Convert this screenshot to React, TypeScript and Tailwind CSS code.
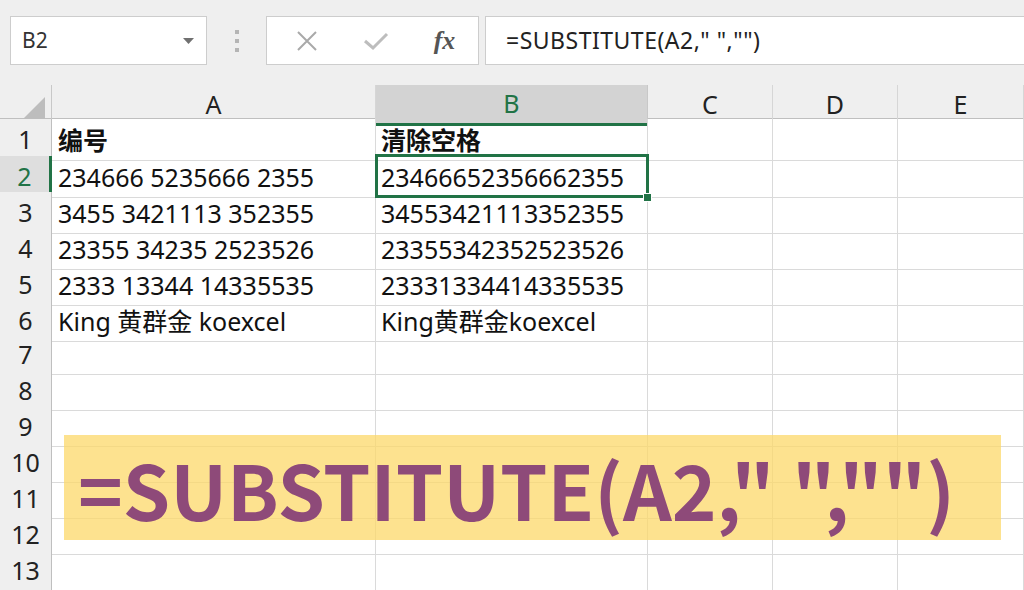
const cols = ["A", "B", "C", "D", "E"];

const rows: { a: string; b: string; bold?: boolean }[] = [
  { a: "编号", b: "清除空格", bold: true },
  { a: "234666 5235666 2355", b: "23466652356662355" },
  { a: "3455 3421113 352355", b: "34553421113352355" },
  { a: "23355 34235 2523526", b: "23355342352523526" },
  { a: "2333 13344 14335535", b: "23331334414335535" },
  { a: "King 黄群金 koexcel", b: "King黄群金koexcel" },
  { a: "", b: "" },
  { a: "", b: "" },
  { a: "", b: "" },
  { a: "", b: "" },
  { a: "", b: "" },
  { a: "", b: "" },
  { a: "", b: "" },
];

const gridCols = "grid grid-cols-[52px_324px_272px_125px_125px_1fr]";
const font = { fontFamily: '"Noto Sans", "Noto Sans CJK SC", sans-serif' };

function Toolbar() {
  return (
    <div className="h-[85px] flex items-start pt-[16px] bg-[#efefef]">
      {/* name box */}
      <div className="ml-[10px] w-[197px] h-[49px] bg-white border border-[#cdcdcd] flex items-center justify-between pl-[11px] pr-[12px]">
        <span className="text-[21px] text-[#333]">B2</span>
        <svg width="11" height="6" viewBox="0 0 11 6">
          <path d="M0 0 L11 0 L5.5 6 Z" fill="#707070" />
        </svg>
      </div>
      <div className="w-[59px] h-[49px] flex flex-col items-center justify-center gap-[5px]">
        <div className="w-[4px] h-[4px] bg-[#b5b5b5]" />
        <div className="w-[4px] h-[4px] bg-[#b5b5b5]" />
        <div className="w-[4px] h-[4px] bg-[#b5b5b5]" />
      </div>
      {/* cancel / enter / fx */}
      <div className="w-[213px] h-[49px] bg-white border border-[#cdcdcd] flex items-center">
        <div className="w-[70px] flex justify-center pl-[10px]">
          <svg width="22" height="22" viewBox="0 0 22 22">
            <path d="M2 2 L20 20 M20 2 L2 20" stroke="#a9a9a9" strokeWidth="2" fill="none" />
          </svg>
        </div>
        <div className="w-[70px] flex justify-center pl-[8px]">
          <svg width="26" height="20" viewBox="0 0 26 20">
            <path d="M2 10 L10 17 L24 3" stroke="#bdbdbd" strokeWidth="3" fill="none" />
          </svg>
        </div>
        <div className="flex-1 flex justify-center pl-[4px]">
          <span
            className="text-[26px] italic font-bold text-[#555] leading-none"
            style={{ fontFamily: '"Liberation Serif", serif' }}
          >
            fx
          </span>
        </div>
      </div>
      {/* formula input */}
      <div className="ml-[6px] flex-1 h-[49px] bg-white border border-[#cdcdcd] border-r-0 flex items-center pl-[20px]">
        <span className="text-[23px] tracking-[0.5px] text-[#222]">=SUBSTITUTE(A2," ","")</span>
      </div>
    </div>
  );
}

function HeaderRow() {
  return (
    <div className={`${gridCols} h-[34px] bg-[#efefef] border-b border-[#bfbfbf]`}>
      <div className="border-r border-[#c8c8c8] flex items-end justify-end pr-[6px] pb-[5px]">
        <svg width="23" height="23" viewBox="0 0 23 23">
          <path d="M23 0 L23 23 L0 23 Z" fill="#bdbdbd" />
        </svg>
      </div>
      {cols.map((c) => (
        <div
          key={c}
          className={
            c === "B"
              ? "bg-[#d3d3d3] border-r border-[#c8c8c8] border-b-[3px] border-b-[#217346] -mb-px flex items-center justify-center text-[25px] text-[#217346]"
              : "border-r border-[#d6d6d6] flex items-center justify-center text-[25px] text-[#222]"
          }
        >
          {c}
        </div>
      ))}
    </div>
  );
}

export default function App() {
  return (
    <div className="w-[1024px] h-[590px] overflow-hidden relative bg-white" style={font}>
      <Toolbar />
      <HeaderRow />
      {rows.map((r, i) => {
        const n = i + 1;
        const sel = n === 2;
        return (
          <div key={n} className={`${gridCols} ${n === 1 ? "h-[37px]" : "h-[36px]"}`}>
            <div
              className={
                sel
                  ? "bg-[#dedede] border-b border-[#d0d0d0] border-r-[3px] border-r-[#217346] flex items-center justify-center text-[25px] text-[#217346]"
                  : "bg-[#efefef] border-b border-[#d0d0d0] border-r border-r-[#bfbfbf] flex items-center justify-center text-[25px] text-[#222]"
              }
            >
              {n}
            </div>
            <div
              className={`border-r border-b border-[#dadada] flex items-center pl-[6px] pt-[3px] text-[25px] text-[#111] whitespace-nowrap ${r.bold ? "font-bold" : ""}`}
            >
              {r.a}
            </div>
            <div
              className={`relative ${sel ? "z-10" : ""} border-r border-b border-[#dadada] flex items-center pl-[5px] pt-[3px] text-[25px] text-[#111] whitespace-nowrap ${r.bold ? "font-bold" : ""}`}
            >
              {r.b}
              {sel && (
                <>
                  <div className="absolute left-[-1px] top-[-2px] right-[-2px] bottom-[-1px] border-[3px] border-[#217346] pointer-events-none" />
                  <div className="absolute right-[-5px] bottom-[-5px] w-[9px] h-[9px] bg-[#217346] border border-white" />
                </>
              )}
            </div>
            <div className="border-r border-b border-[#dadada]" />
            <div className="border-r border-b border-[#dadada]" />
            <div className="border-r border-b border-[#dadada]" />
          </div>
        );
      })}

      {/* yellow caption banner laid over the sheet */}
      <div className="absolute z-20 left-[64px] top-[435px] w-[937px] h-[105px] bg-[#fcd86a]/75 flex items-center pl-[14px]">
        <span
          className="text-[76px] font-bold text-[#8e4a79] leading-none whitespace-nowrap"
          style={{ fontFamily: '"Noto Sans CJK SC", sans-serif' }}
        >
          =SUBSTITUTE(A2," ","")
        </span>
      </div>
    </div>
  );
}
